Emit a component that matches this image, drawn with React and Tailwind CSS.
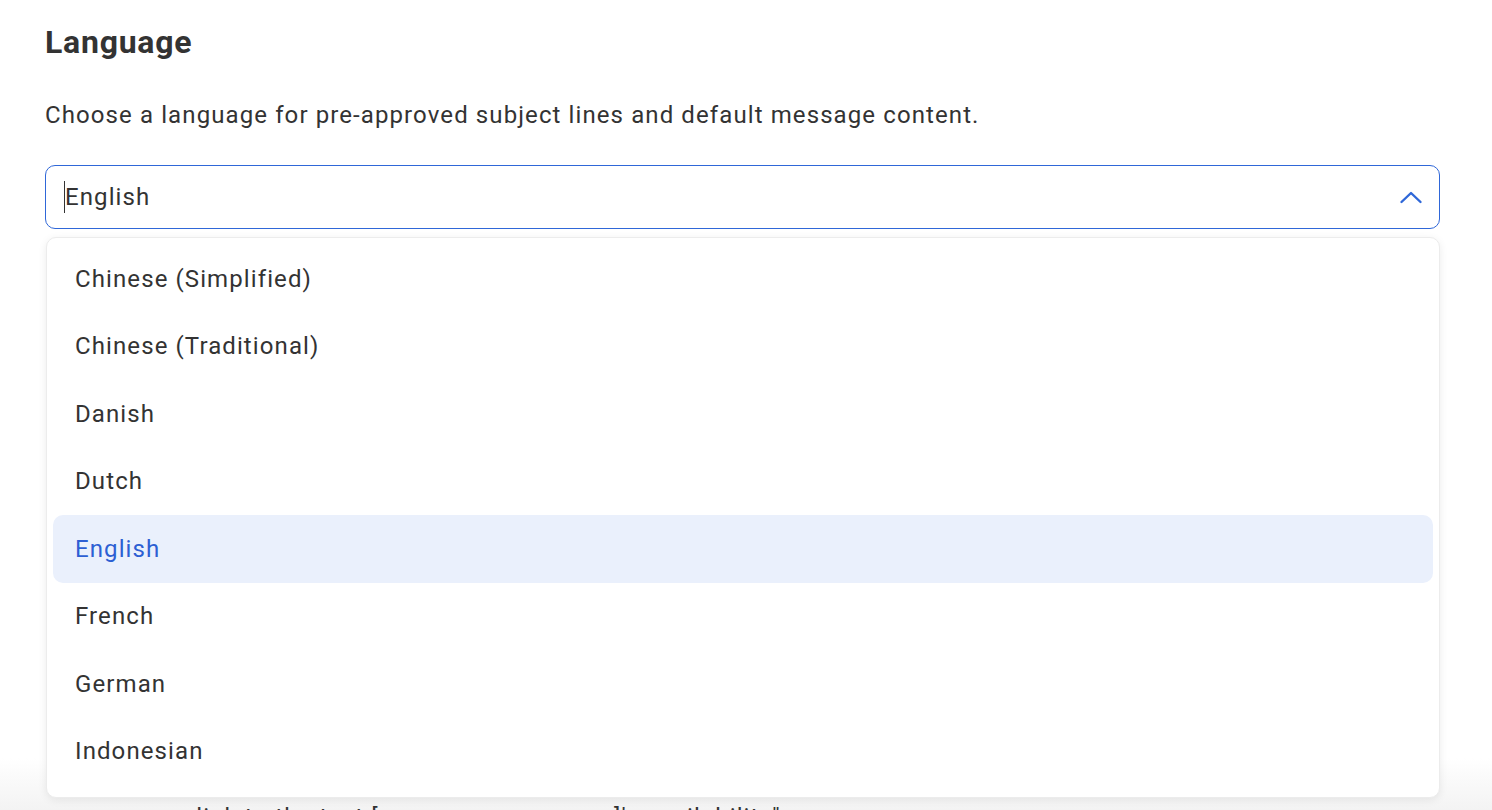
import React, { useState } from 'react';

const LANGUAGES = [
  'Chinese (Simplified)',
  'Chinese (Traditional)',
  'Danish',
  'Dutch',
  'English',
  'French',
  'German',
  'Indonesian',
];

function ChevronUp() {
  return (
    <svg width="24" height="24" viewBox="0 0 24 24" fill="none" stroke="#2f67d8" strokeWidth="2.4" strokeLinecap="round" strokeLinejoin="round">
      <path d="M2.5 17 L12 8 L21.5 17" />
    </svg>
  );
}

export default function App() {
  const [selected, setSelected] = useState('English');

  return (
    <div className="relative h-[810px] w-full overflow-hidden bg-white font-['Roboto','Liberation_Sans',sans-serif] text-[#333]">
      {/* bottom fade */}
      <div className="absolute bottom-0 left-0 right-0 h-[52px] bg-gradient-to-b from-white to-[#f3f3f3]" />

      <div className="relative pl-[45px] pr-[52px] pt-[22px]">
        <h1 className="text-[32px] font-bold leading-[40px] tracking-[0.75px] text-[#333]">Language</h1>
        <p className="mt-[37px] text-[24px] leading-[32px] tracking-[1.1px] text-[#333]">
          Choose a language for pre-approved subject lines and default message content.
        </p>

        <div className="relative mt-[34px]">
          <div className="flex h-[64px] items-center justify-between rounded-[10px] border border-[#2f67d8] pl-[18px] pr-[16px]">
            <div className="flex items-center">
              <span className="h-[32px] w-px bg-[#333]" />
              <span className="text-[24px] tracking-[1.1px] text-[#333]">{selected}</span>
            </div>
            <ChevronUp />
          </div>

          {/* dropdown menu */}
          <div className="absolute left-px right-0 top-[72px] z-10 h-[561px] rounded-[10px] border border-[#ececec] bg-white px-[6px] pt-[7px] shadow-[0_2px_8px_rgba(0,0,0,0.08)]">
            {LANGUAGES.map(lang => (
              <div
                key={lang}
                onClick={() => setSelected(lang)}
                className={
                  lang === selected
                    ? 'flex h-[67.5px] items-center rounded-[10px] bg-[#eaf0fc] pl-[22px] text-[24px] tracking-[1.1px] text-[#2d5fd3]'
                    : 'flex h-[67.5px] items-center pl-[22px] text-[24px] tracking-[1.1px] text-[#333]'
                }
              >
                {lang}
              </div>
            ))}
          </div>
        </div>

        <div className="h-[572px]" />
        <p className="pl-[130px] text-[24px] leading-[32px] tracking-[1.1px] text-[#333]">
          a link to the text [your company name]'s availability"
        </p>
      </div>
    </div>
  );
}
